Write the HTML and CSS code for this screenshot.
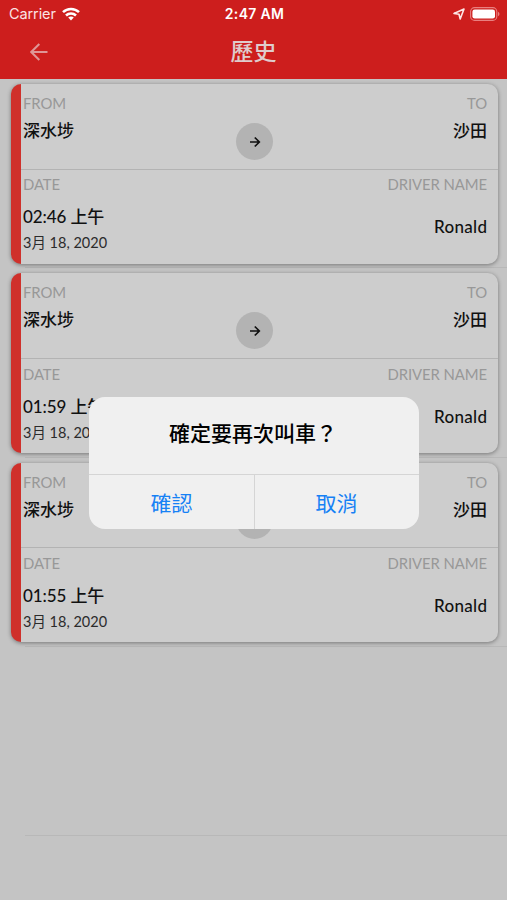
FILE: index.html
```html
<!DOCTYPE html>
<html lang="zh-Hant">
<head>
<meta charset="utf-8">
<title>歷史</title>
<link rel="stylesheet" href="styles.css">
</head>
<body>
<header class="header">
  <div class="status">
    <div class="carrier"><span class="carrier-name">Carrier</span>
      <svg class="wifi" viewBox="0 0 18 14" width="18" height="14"><g fill="none" stroke="#fff" stroke-width="2.5"><path d="M1 5.2C5.4.8 12.6.8 17 5.2"/><path d="M4 8.5c2.8-2.8 7.2-2.8 10 0"/></g><path d="M9 13.4 6.2 10.6c1.5-1.5 4.1-1.5 5.6 0z" fill="#fff"/></svg>
    </div>
    <div class="time">2:47 AM</div>
    <div class="power">
      <svg viewBox="0 0 12 12" width="12" height="12"><path d="M1 5.4 11 1 7.2 11 6 6.3z" fill="none" stroke="#fde5e5" stroke-width="1.6" stroke-linejoin="round"/></svg>
      <svg viewBox="0 0 30 14" width="30" height="14"><rect x=".6" y=".6" width="26.2" height="12.8" rx="4" fill="none" stroke="#e98080" stroke-width="1.1"/><rect x="2.4" y="2.4" width="22.6" height="9.2" rx="2.3" fill="#fff"/><path d="M28 4.8c2 .8 2 3.6 0 4.4z" fill="#e98080"/></svg>
    </div>
  </div>
  <div class="nav">
    <svg class="back" viewBox="0 0 18 18" width="18" height="18"><path d="M17.5 9H1.5M9.3.9 1.2 9l8.1 8.1" fill="none" stroke="#df9696" stroke-width="2.1"/></svg>
    <h1 class="title">歷史</h1>
  </div>
</header>
<main class="list">
  <div class="item"><article class="card">
    <section class="route"><div><div class="label">FROM</div><div class="place">深水埗</div></div>
      <div class="go"><svg viewBox="0 0 12 12" width="12" height="12"><path d="M1 6h9M5.8 1.5 10.3 6l-4.5 4.5" fill="none" stroke="#111" stroke-width="1.7"/></svg></div>
      <div class="right"><div class="label">TO</div><div class="place">沙田</div></div></section>
    <section class="trip"><div><div class="label">DATE</div><div class="clock">02:46 上午</div><div class="day">3月 18, 2020</div></div>
      <div class="right"><div class="label">DRIVER NAME</div><div class="name">Ronald</div></div></section>
  </article></div>
  <div class="item"><article class="card">
    <section class="route"><div><div class="label">FROM</div><div class="place">深水埗</div></div>
      <div class="go"><svg viewBox="0 0 12 12" width="12" height="12"><path d="M1 6h9M5.8 1.5 10.3 6l-4.5 4.5" fill="none" stroke="#111" stroke-width="1.7"/></svg></div>
      <div class="right"><div class="label">TO</div><div class="place">沙田</div></div></section>
    <section class="trip"><div><div class="label">DATE</div><div class="clock">01:59 上午</div><div class="day">3月 18, 2020</div></div>
      <div class="right"><div class="label">DRIVER NAME</div><div class="name">Ronald</div></div></section>
  </article></div>
  <div class="item"><article class="card">
    <section class="route"><div><div class="label">FROM</div><div class="place">深水埗</div></div>
      <div class="go"><svg viewBox="0 0 12 12" width="12" height="12"><path d="M1 6h9M5.8 1.5 10.3 6l-4.5 4.5" fill="none" stroke="#111" stroke-width="1.7"/></svg></div>
      <div class="right"><div class="label">TO</div><div class="place">沙田</div></div></section>
    <section class="trip"><div><div class="label">DATE</div><div class="clock">01:55 上午</div><div class="day">3月 18, 2020</div></div>
      <div class="right"><div class="label">DRIVER NAME</div><div class="name">Ronald</div></div></section>
  </article></div>
  <div class="item"></div>
</main>
<div class="alert" role="alertdialog">
  <div class="message">確定要再次叫車？</div>
  <div class="actions"><button class="action">確認</button><button class="action">取消</button></div>
</div>
</body>
</html>
```

FILE: styles.css
```css
* { box-sizing: border-box; }
body {
  margin: 0;
  height: 900px;
  overflow: hidden;
  background: #c4c4c4;
  color: #111;
  font-family: Lato, "Noto Sans CJK TC", sans-serif;
}
.header { height: 79px; background: #cd1e1d; color: #fff; }
.status {
  display: grid;
  grid-template-columns: 1fr auto 1fr;
  align-items: center;
  height: 27px;
  padding: 0 7px 0 9px;
  font: 14.5px/27px Inter, sans-serif;
}
.carrier { display: flex; align-items: center; gap: 6px; color: #fbe3e3; }
.carrier-name { letter-spacing: -0.1px; }
.time { font-size: 14px; font-weight: 600; letter-spacing: 0.3px; }
.power { display: flex; align-items: center; justify-content: flex-end; gap: 5px; }
.nav {
  display: grid;
  grid-template-columns: 1fr auto 1fr;
  align-items: center;
  height: 50px;
  padding: 0 30px;
}
.title {
  margin: 0;
  padding-bottom: 4px;
  color: #dfcccc;
  font: 500 23px/46px "Noto Sans CJK TC", sans-serif;
}
.list { padding-top: 0.1px; }
.item {
  height: 189.35px;
  padding: 5px 9px 0 11px;
  background: linear-gradient(#b8b8b8, #b8b8b8) 25px 100% / 100% 1px no-repeat;
}
.card {
  height: 179.5px;
  border-left: 10px solid #cf302b;
  border-radius: 10px;
  background: #cdcdcd;
  box-shadow: 0 1px 4px rgba(0, 0, 0, .4);
}
.route, .trip { display: flex; justify-content: space-between; padding: 0 11px 0 2px; }
.route { height: 85.5px; border-bottom: 1px solid #b3b3b3; padding-top: 9px; }
.route > div:first-child { flex: 0 0 213px; }
.route > .right { flex: 1; }
.trip { padding-top: 4.6px; }
.right { text-align: right; }
.label { color: #989898; font-size: 14.9px; line-height: 20px; letter-spacing: -0.1px; }
.place { margin-top: 5px; font-size: 17px; line-height: 25px; font-weight: 500; }
.go {
  display: grid;
  place-items: center;
  width: 37px;
  height: 37px;
  margin-top: 30px;
  border-radius: 50%;
  background: #b3b3b3;
}
.clock { margin-top: 10px; font-size: 17px; line-height: 26px; font-weight: 500; letter-spacing: -0.1px; }
.day { font-size: 14.5px; line-height: 26px; color: #2b2b2b; }
.name { margin: 20px -0.3px 0 0; font-size: 17px; line-height: 26px; font-weight: 500; letter-spacing: 0.3px; }
.alert {
  position: absolute;
  left: 89px;
  top: 397px;
  width: 330px;
  height: 132px;
  overflow: hidden;
  border-radius: 16px;
  background: #f0f0f0;
  font-family: "Noto Sans CJK TC", sans-serif;
}
.message {
  height: 78px;
  padding-right: 2px;
  border-bottom: 1px solid #d5d5d5;
  color: #000;
  font-size: 21px;
  font-weight: 500;
  line-height: 71px;
  text-align: center;
}
.actions { display: grid; grid-template-columns: 1fr 1fr; height: 54px; }
.action {
  padding: 0;
  border: 0;
  background: none;
  color: #1681f5;
  font: 21px/54px "Noto Sans CJK TC", sans-serif;
}
.action + .action { border-left: 1px solid #d5d5d5; padding-right: 1px; }
```
